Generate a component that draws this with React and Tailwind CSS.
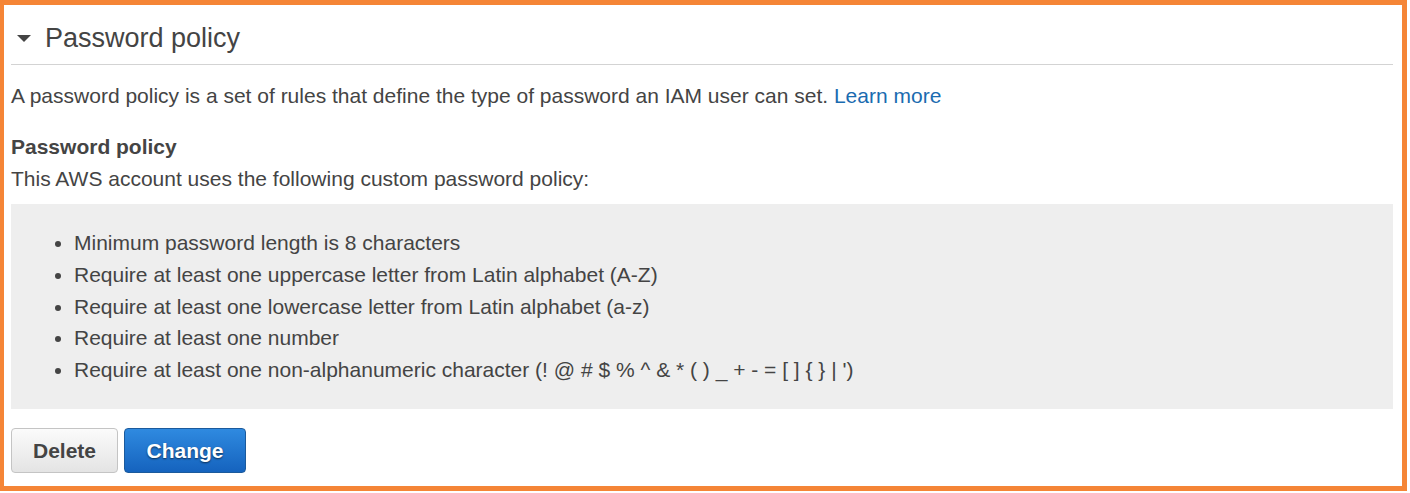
export default function App() {
  const rules = [
    "Minimum password length is 8 characters",
    "Require at least one uppercase letter from Latin alphabet (A-Z)",
    "Require at least one lowercase letter from Latin alphabet (a-z)",
    "Require at least one number",
    "Require at least one non-alphanumeric character (! @ # $ % ^ & * ( ) _ + - = [ ] { } | ')",
  ];

  return (
    <div className="w-[1410px] h-[493px] bg-white" style={{ fontFamily: "'Liberation Sans', Arial, sans-serif" }}>
      <div className="w-[1407px] h-[491px] border-t-[5px] border-l-[4px] border-r-[5px] border-b-[5px] border-[#f58536] pl-[7px] pr-[9px] text-[#444444]">
        {/* Section header */}
        <div className="flex items-center pt-[17px] pb-[10px] border-b border-[#d3d3d3]">
          <svg width="14" height="8" viewBox="0 0 14 8" className="ml-[6px] mt-[2px]">
            <polygon points="0,0 14,0 7,7" fill="#444444" />
          </svg>
          <h2 className="ml-[14px] text-[27px] leading-[32px] font-normal">Password policy</h2>
        </div>

        <p className="mt-[15px] text-[21px] leading-[32px]">
          A password policy is a set of rules that define the type of password an IAM user can set.{" "}
          <a href="#" className="text-[#1a6bb0]">Learn more</a>
        </p>

        <div className="mt-[19px] text-[21px] leading-[32px]">
          <div className="font-bold">Password policy</div>
          <div>This AWS account uses the following custom password policy:</div>
        </div>

        <div className="mt-[9px] bg-[#eeeeee] py-[23px]">
          <ul className="list-disc pl-[63px] text-[21px] leading-[31.75px]">
            {rules.map((r) => (
              <li key={r}>{r}</li>
            ))}
          </ul>
        </div>

        <div className="mt-[19px] flex gap-[6px]">
          <button className="w-[107px] h-[45px] rounded-[4px] border border-[#c4c4c4] bg-gradient-to-b from-[#fbfbfb] to-[#e4e4e4] text-[21px] font-bold text-[#444444]">
            Delete
          </button>
          <button
            className="w-[122px] h-[45px] rounded-[4px] border border-[#1b5a9c] bg-gradient-to-b from-[#2f8ae0] to-[#1563be] text-[21px] font-bold text-white [text-shadow:0_1px_2px_rgba(0,0,0,0.6)]"
          >
            Change
          </button>
        </div>
      </div>
    </div>
  );
}
